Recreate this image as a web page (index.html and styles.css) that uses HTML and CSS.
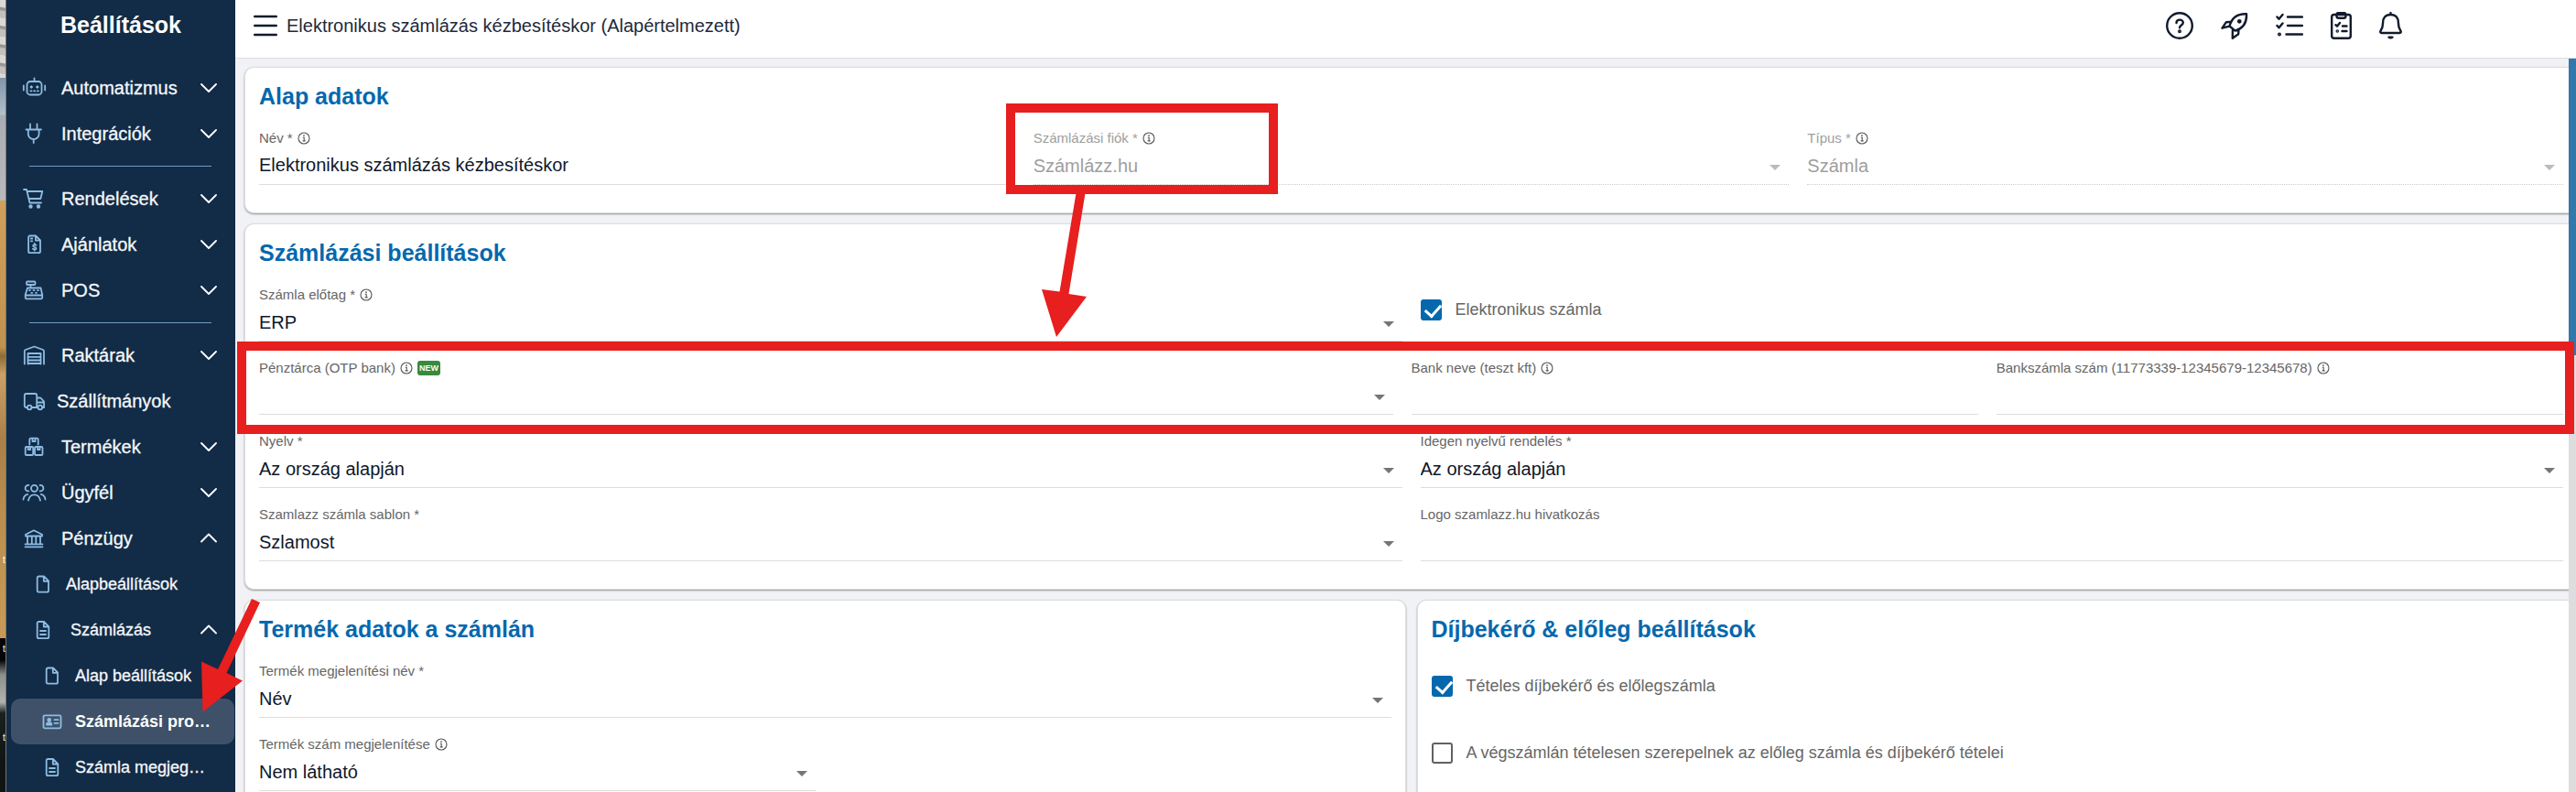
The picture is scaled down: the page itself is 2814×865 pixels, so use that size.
FILE: index.html
```html
<!DOCTYPE html>
<html lang="hu">
<head>
    <meta charset="UTF-8">
    <meta name="viewport" content="width=device-width, initial-scale=1.0">
    <title>Beállítások</title>
    <link rel="stylesheet" href="styles.css">
</head>
<body>
    <svg class="symbols" width="0" height="0" aria-hidden="true">
        <symbol id="info" viewBox="0 0 14 14">
            <circle cx="7" cy="7" r="6" fill="none" stroke="#555" stroke-width="1.1"/>
            <path d="M5.8 6.2H7.2V9.8M5.6 9.9H8.7" fill="none" stroke="#555" stroke-width="1.1"/>
            <circle cx="7" cy="4.1" r=".9" fill="#555"/>
        </symbol>
        <symbol id="down" viewBox="0 0 18 18"><path d="M1 5l8 8 8-8" fill="none" stroke="#fff" stroke-width="1.8" stroke-linecap="round" stroke-linejoin="round"/></symbol>
        <symbol id="up" viewBox="0 0 18 18"><path d="M1 12.500l8-8 8 8" fill="none" stroke="#fff" stroke-width="1.8" stroke-linecap="round" stroke-linejoin="round"/></symbol>
        <symbol id="file" viewBox="0 0 30 24"><path d="M10.500 3.500H16l5 5V19a1.700 1.700 0 0 1-1.700 1.700h-9A1.700 1.700 0 0 1 8.700 19V5.200a1.700 1.700 0 0 1 1.700-1.700zM15.800 4v4.800h5"/></symbol>
        <symbol id="file-lines" viewBox="0 0 30 24"><path d="M10.500 3H16l5.300 5.300V19.500a1.700 1.700 0 0 1-1.700 1.700h-9.200a1.700 1.700 0 0 1-1.700-1.700V4.700A1.700 1.700 0 0 1 10.500 3zM15.800 3.500v5h5M12 13h6M12 17h6"/></symbol>
    </svg>

    <div class="app">
        <div class="desktop">
            <span class="d1">t</span>
            <span class="d2">t</span>
            <span class="d3">t</span>
        </div>

        <nav class="sidebar">
            <h1>Beállítások</h1>
            <button class="item">
                <svg class="icon" viewBox="0 0 30 24"><rect x="7.500" y="5" width="16" height="14.500" rx="3.500"/><path d="M15.500 1.500V5M3.800 9.500v5M27.200 9.500v5M11.500 11h1.600M18 11h1.600M12.300 10.200v1.600M18.800 10.200v1.600M11.300 15.300h1.200M15 15.300h1.200M18.700 15.300h1.200"/></svg>
                <span>Automatizmus</span><svg class="chev"><use href="#down"/></svg>
            </button>
            <button class="item">
                <svg class="icon" viewBox="0 0 30 24"><path d="M6.500 7.500h16.500M8.800 7.500v4.700a5.900 5.900 0 0 0 11.800 0V7.500M11 1.500v6M18.500 1.500v6M14.700 18v4"/></svg>
                <span>Integrációk</span><svg class="chev"><use href="#down"/></svg>
            </button>
            <hr>
            <button class="item">
                <svg class="icon" viewBox="0 0 30 24"><path d="M4 2h3l3.500 14.500h12.500M7.500 4h16.800l-2 8H9.500"/><circle cx="11.500" cy="20.500" r="1.300" class="dot"/><circle cx="20" cy="20.500" r="1.300" class="dot"/></svg>
                <span>Rendelések</span><svg class="chev"><use href="#down"/></svg>
            </button>
            <button class="item">
                <svg class="icon" viewBox="0 0 30 24"><path d="M10.500 2.500H17l5 5v12a1.700 1.700 0 0 1-1.700 1.700h-9.500a1.700 1.700 0 0 1-1.700-1.700V4a1.700 1.700 0 0 1 1.400-1.500zM17 3v4.700h4.700M11.800 5.500h1.500M11.800 8.300h1.500"/><path d="M17.500 12.800c-1.500-1-3.400-.6-3.400.7 0 1.700 3.400 1 3.400 2.700 0 1.400-2.200 1.600-3.600.6M15.700 11v1.200M15.700 17.200v1.300"/></svg>
                <span>Ajánlatok</span><svg class="chev"><use href="#down"/></svg>
            </button>
            <button class="item">
                <svg class="icon" viewBox="0 0 30 24"><rect x="7" y="2.500" width="9.500" height="3.500" rx="1"/><path d="M11.500 6v3.500M8 9.500h14.500l1.700 7.500v3a1.300 1.300 0 0 1-1.300 1.300H7A1.300 1.300 0 0 1 5.700 20v-3zM5.700 17.500h18.500M10 12.200h1M14.500 12.200h1M19 12.200h1M12.200 14.800h1M17 14.800h1"/></svg>
                <span>POS</span><svg class="chev"><use href="#down"/></svg>
            </button>
            <hr>
            <button class="item">
                <svg class="icon" viewBox="0 0 30 24"><path d="M4.800 21.500V7.500c0-.7.300-1.200 1-1.500L15.500 2.500 25 6c.7.300 1 .8 1 1.500v14M8.500 21.500V10h14v11.500M9 13.800h13M9 17.500h13M9 21h13"/></svg>
                <span>Raktárak</span><svg class="chev"><use href="#down"/></svg>
            </button>
            <a class="item link" href="#">
                <svg class="icon" viewBox="0 0 30 24"><path d="M8 19H6.500A1.700 1.700 0 0 1 4.800 17.300V5.700A1.700 1.700 0 0 1 6.500 4h10a1.700 1.700 0 0 1 1.700 1.700V19M12.500 19h6M18.200 8.500h3.300c.6 0 1 .2 1.400.6l2.600 2.700c.4.400.6.800.6 1.400V19h-1M18.500 13.500H26"/><circle cx="10.200" cy="19" r="2.300"/><circle cx="21.800" cy="19" r="2.300"/></svg>
                <span>Szállítmányok</span>
            </a>
            <button class="item">
                <svg class="icon" viewBox="0 0 30 24"><path d="M10.300 9.500V4a1.300 1.300 0 0 1 1.300-1.300h6.800A1.300 1.300 0 0 1 19.700 4v5.500M13.500 3v3h3V3"/><rect x="5.700" y="12" width="8.500" height="9" rx="1.300"/><rect x="16" y="12" width="8.500" height="9" rx="1.300"/><path d="M8.700 12v3h2.500v-3M19 12v3h2.500v-3"/></svg>
                <span>Termékek</span><svg class="chev"><use href="#down"/></svg>
            </button>
            <button class="item">
                <svg class="icon" viewBox="0 0 30 24"><circle cx="15.500" cy="7.300" r="3.500"/><path d="M9.300 4A3.200 3.200 0 1 0 9.300 10.300M21.700 4a3.200 3.200 0 1 1 0 6.300M9 20.500c.8-4.200 3.200-6.200 6.500-6.200s5.700 2 6.500 6.200M3.500 19.500c.3-3 1.600-5 4.700-5.700M27.500 19.500c-.3-3-1.600-5-4.700-5.700"/></svg>
                <span>Ügyfél</span><svg class="chev"><use href="#down"/></svg>
            </button>
            <button class="item">
                <svg class="icon" viewBox="0 0 30 24"><path d="M15 3.300 6 7.800v1.700h18V7.800zM5.500 18.300h19M5.500 21.300h19M8 9.500v8.500M12.800 9.500v8.500M17.300 9.500v8.500M22 9.500v8.500"/></svg>
                <span>Pénzügy</span><svg class="chev"><use href="#up"/></svg>
            </button>
            <a class="item link sub" href="#"><svg class="icon"><use href="#file"/></svg><span>Alapbeállítások</span></a>
            <button class="item sub"><svg class="icon"><use href="#file-lines"/></svg><span>Számlázás</span><svg class="chev"><use href="#up"/></svg></button>
            <a class="item link sub deep" href="#"><svg class="icon"><use href="#file"/></svg><span>Alap beállítások</span></a>
            <a class="item link sub deep active" href="#">
                <svg class="icon" viewBox="0 0 30 24"><rect x="5.500" y="5.300" width="19" height="14" rx="1.500"/><circle cx="11.700" cy="10.300" r="1.500" class="dot"/><path class="dot" d="M9 15.500c0-3 5.400-3 5.400 0z"/><path d="M17.500 10.200h4M17.500 13.800h4"/></svg>
                <span>Számlázási pro…</span>
            </a>
            <a class="item link sub deep" href="#"><svg class="icon"><use href="#file-lines"/></svg><span>Számla megjeg…</span></a>
        </nav>

        <div class="page">
            <header class="topbar">
                <button class="menu" aria-label="Menü"><svg width="26" height="24" viewBox="0 0 26 24"><path d="M1.200 2h23.600M1.200 12h23.600M1.200 22h23.600"/></svg></button>
                <span class="page-title">Elektronikus számlázás kézbesítéskor (Alapértelmezett)</span>
                <div class="tools">
                    <button aria-label="Súgó"><svg width="30" height="30" viewBox="0 0 30 30"><circle cx="15" cy="15" r="13.800"/><path d="M11.500 12c0-4.600 7.300-4.400 7.300-.3 0 2.900-3.800 2.600-3.800 5.600"/><circle cx="15" cy="21.300" r=".8"/></svg></button>
                    <button aria-label="Indítás"><svg width="30" height="30" viewBox="0 0 30 30"><path d="M9.500 15.500C12 6.500 18.500 1.800 28 2.300c.6 9-3.800 15.700-12.300 18.300zM11.500 10.800l-5.600.4L1.500 17.700l8-2M19.500 18.800l-.3 5.500-6.400 4.500.1-8.800"/><circle cx="20.300" cy="10.300" r="1.200"/></svg></button>
                    <button aria-label="Feladatok"><svg width="30" height="30" viewBox="0 0 30 30"><path d="M1.500 5.500l2 2.300L7.500 3M1.500 15l2 2.300L7.500 12.500M13 5.500h16M13 15h16M11.500 24.500H29"/><circle cx="4" cy="24.500" r=".8"/></svg></button>
                    <button aria-label="Lista"><svg width="23" height="30" viewBox="0 0 23 30"><rect x="1.200" y="3" width="20.600" height="25.700" rx="2.500"/><path d="M6.500 3v1.500c0 1.500 1 2.300 2.300 2.300h5.500c1.300 0 2.200-.8 2.200-2.300V3c0-1.200-.9-2-2.200-2H8.800C7.500 1 6.500 1.800 6.500 3zM5.500 14.200l1.500 1.500 3-3.700M13 15.500h4.500M12.500 21h5"/><circle cx="7.300" cy="21" r=".6"/></svg></button>
                    <button aria-label="Értesítések"><svg width="25" height="30" viewBox="0 0 25 30"><path d="M12.500 1v2M12.500 3c-6 0-8.400 4-8.400 8.700 0 4.500-.8 6.600-2.500 9-.7 1.100-.3 2.300 1 2.300h19.800c1.300 0 1.700-1.200 1-2.300-1.700-2.400-2.500-4.500-2.500-9C20.900 7 18.500 3 12.500 3z"/><path d="M10.500 27.700c1 .9 3 .9 4 0z"/></svg></button>
                </div>
            </header>

            <main class="content">
                <section class="card wide">
                    <h2>Alap adatok</h2>
                    <div class="row three">
                        <div class="field">
                            <label for="nev">Név * <svg class="info"><use href="#info"/></svg></label>
                            <input type="text" id="nev" value="Elektronikus számlázás kézbesítéskor">
                        </div>
                        <div class="field disabled">
                            <label for="fiok">Számlázási fiók * <svg class="info"><use href="#info"/></svg></label>
                            <div class="select"><select id="fiok" disabled><option>Számlázz.hu</option></select></div>
                            <div class="mark mark-account"></div>
                        </div>
                        <div class="field disabled">
                            <label for="tipus">Típus * <svg class="info"><use href="#info"/></svg></label>
                            <div class="select"><select id="tipus" disabled><option>Számla</option></select></div>
                        </div>
                    </div>
                </section>

                <section class="card wide">
                    <h2>Számlázási beállítások</h2>
                    <div class="row two">
                        <div class="field">
                            <label for="elotag">Számla előtag * <svg class="info"><use href="#info"/></svg></label>
                            <div class="select"><select id="elotag"><option>ERP</option></select></div>
                        </div>
                        <label class="check"><input type="checkbox" checked> Elektronikus számla</label>
                    </div>
                    <div class="row bank">
                        <div class="field">
                            <label for="penztarca">Pénztárca (OTP bank) <svg class="info"><use href="#info"/></svg><span class="badge">NEW</span></label>
                            <div class="select"><select id="penztarca"><option></option></select></div>
                        </div>
                        <div class="field">
                            <label for="bank">Bank neve (teszt kft) <svg class="info"><use href="#info"/></svg></label>
                            <input type="text" id="bank">
                        </div>
                        <div class="field">
                            <label for="szamlaszam">Bankszámla szám (11773339-12345679-12345678) <svg class="info"><use href="#info"/></svg></label>
                            <input type="text" id="szamlaszam">
                        </div>
                        <div class="mark mark-bank"></div>
                    </div>
                    <div class="row two">
                        <div class="field">
                            <label for="nyelv">Nyelv *</label>
                            <div class="select"><select id="nyelv"><option>Az ország alapján</option></select></div>
                        </div>
                        <div class="field">
                            <label for="idegen">Idegen nyelvű rendelés *</label>
                            <div class="select"><select id="idegen"><option>Az ország alapján</option></select></div>
                        </div>
                    </div>
                    <div class="row two">
                        <div class="field">
                            <label for="sablon">Szamlazz számla sablon *</label>
                            <div class="select"><select id="sablon"><option>Szlamost</option></select></div>
                        </div>
                        <div class="field">
                            <label for="logo">Logo szamlazz.hu hivatkozás</label>
                            <input type="text" id="logo">
                        </div>
                    </div>
                </section>

                <div class="cards">
                    <section class="card">
                        <h2>Termék adatok a számlán</h2>
                        <div class="row">
                            <div class="field">
                                <label for="termeknev">Termék megjelenítési név *</label>
                                <div class="select"><select id="termeknev"><option>Név</option></select></div>
                            </div>
                        </div>
                        <div class="row two">
                            <div class="field">
                                <label for="termekszam">Termék szám megjelenítése <svg class="info"><use href="#info"/></svg></label>
                                <div class="select"><select id="termekszam"><option>Nem látható</option></select></div>
                            </div>
                        </div>
                    </section>
                    <section class="card wide">
                        <h2>Díjbekérő &amp; előleg beállítások</h2>
                        <div class="checks">
                            <label class="check"><input type="checkbox" checked> Tételes díjbekérő és előlegszámla</label>
                            <label class="check"><input type="checkbox"> A végszámlán tételesen szerepelnek az előleg számla és díjbekérő tételei</label>
                        </div>
                    </section>
                </div>
            </main>
            <div class="scrollbar"><div class="thumb"></div></div>
        </div>
    </div>

    <!-- arrows -->
    <svg class="arrows" aria-hidden="true">
        <path d="M1176 208h10l-18.500 113 19.500 3-33 44-16-52 19.500 2.500z"/>
        <path d="M275 654l9 4-36.500 77 17.500 8.500-43.500 34L220 722.500l18 8.500z"/>
    </svg>
</body>
</html>
```

FILE: styles.css
```css
* {
    box-sizing: border-box;
}
body {
    margin: 0;
    font-family: Arial, "Liberation Sans", sans-serif;
    color: #0f172a;
    overflow: hidden;
}
button, input, select {
    font: inherit;
    color: inherit;
}
button {
    background: none;
    border: 0;
    padding: 0;
    cursor: pointer;
}
.symbols {
    position: absolute;
}
.app {
    display: flex;
    height: 100vh;
    overflow: hidden;
}

/* strip of the desktop behind the window */
.desktop {
    position: relative;
    flex: none;
    width: 7px;
    overflow: hidden;
    border-right: 1px solid #777;
    background:
        repeating-linear-gradient(190deg, #dcd8d6 0 8px, #9a9593 9px 11px, #c4c0be 13px 20px) 0 0 / 100% 85px no-repeat,
        linear-gradient(#7e95ab 0, #b3bfcb 40px, #a9adb3 41px, #b9b9bb 134px) 0 85px / 100% 134px no-repeat,
        linear-gradient(#cfa05a, #c0924e 160px, #8f6a35 170px, #caa266 190px, #a98048 260px, #b98d4d 340px, #c79b57 478px) 0 219px / 100% 478px no-repeat,
        linear-gradient(#050505 0 24px, #8c918d 40px, #b0b3ae 70px, #1a201d 82px, #101514 140px, #1c2421) 0 697px;
}
.desktop span {
    position: absolute;
    left: 3px;
    font-size: 10px;
    line-height: 12px;
    color: #fff;
}
.d1 { top: 606px; }
.d2 { top: 703px; }
.d3 { top: 800px; }

.sidebar {
    flex: none;
    width: 250px;
    background: #122b46;
    color: #f4f7fa;
}
.sidebar h1 {
    margin: 0 0 17px;
    font-size: 25px;
    line-height: 54px;
    text-align: center;
    color: #fff;
}
.sidebar hr {
    margin: 10px 26px 10px 25px;
    border: 0;
    border-top: 1px solid #6d9fc4;
}
.item {
    display: flex;
    align-items: center;
    gap: 15px;
    width: 244px;
    height: 50px;
    margin-left: 5px;
    padding: 0 19px 0 10px;
    border-radius: 10px;
    font-size: 20px;
    color: inherit;
    text-align: left;
    text-decoration: none;
    white-space: nowrap;
    -webkit-text-stroke: 0.3px;
}
.item span {
    flex: 1;
}
.link {
    gap: 10px;
}
.sub {
    padding-left: 20px;
    font-size: 18px;
}
.deep {
    padding-left: 30px;
}
.active {
    background: #3e5168;
    color: #fff;
    font-weight: bold;
    -webkit-text-stroke: 0;
}
.icon {
    flex: none;
    width: 30px;
    height: 24px;
    fill: none;
    stroke: #8ebce2;
    stroke-width: 1.8;
    stroke-linecap: round;
    stroke-linejoin: round;
}
.dot {
    fill: #8ebce2;
}
.chev {
    flex: none;
    width: 18px;
    height: 18px;
}

.page {
    position: relative;
    flex: 1;
    min-width: 0;
    display: flex;
    flex-direction: column;
}
.topbar {
    flex: none;
    display: flex;
    align-items: center;
    height: 64px;
    padding: 0 190px 7px 20px;
    border-bottom: 1px solid #ddd;
    background: #fff;
}
.topbar svg {
    display: block;
    fill: none;
    stroke: #111b2d;
    stroke-width: 2.4;
    stroke-linecap: round;
    stroke-linejoin: round;
}
.page-title {
    margin-left: 10px;
    font-size: 20px;
    color: #1e293b;
}
.tools {
    display: flex;
    gap: 30px;
    margin-left: auto;
}

.content {
    flex: 1;
    min-height: 0;
    display: flex;
    flex-direction: column;
    gap: 11px;
    padding: 9px 0 0 10px;
    background: #f1f2f6;
    overflow: hidden;
}
.card {
    flex: none;
    padding: 16px 15px 30px;
    border: 1px solid #ddd;
    border-radius: 10px;
    background: #fff;
    box-shadow: 0 1px 2px rgba(0, 0, 0, 0.4);
}
.wide {
    padding-right: 14px;
    border-right: 0;
    border-radius: 10px 0 0 10px;
}
.card h2 {
    margin: 0 0 22px;
    font-size: 25px;
    line-height: 30px;
    color: #0568ad;
}
.cards {
    display: grid;
    grid-template-columns: 1fr 1fr;
    gap: 12px;
    margin-right: -2px;
}
.row {
    position: relative;
    display: grid;
    gap: 20px;
}
.row + .row {
    margin-top: 20px;
}
.two { grid-template-columns: 1fr 1fr; }
.three { grid-template-columns: 1fr 1fr 1fr; }
.bank { grid-template-columns: 2fr 1fr 1fr; }

.field {
    position: relative;
    min-width: 0;
}
.field label {
    display: flex;
    align-items: center;
    gap: 5px;
    height: 18px;
    font-size: 15px;
    line-height: 18px;
    color: #666;
    white-space: nowrap;
}
.info {
    width: 14px;
    height: 14px;
}
.badge {
    padding: 0 2px;
    border-radius: 3px;
    background: #388a3c;
    color: #fff;
    font-size: 9px;
    font-weight: bold;
    line-height: 16px;
}
.field input,
.field select {
    display: block;
    width: 100%;
    height: 42px;
    padding: 0;
    border: 0;
    border-bottom: 1px solid #ddd;
    border-radius: 0;
    background: none;
    font-size: 20px;
    outline: none;
    appearance: none;
}
.select {
    position: relative;
}
.select::after {
    content: "";
    position: absolute;
    right: 9px;
    top: 20px;
    border: 6px solid transparent;
    border-top-color: #757575;
    border-bottom: 0;
    pointer-events: none;
}
.disabled label {
    color: #9e9e9e;
}
.disabled select {
    border-bottom-style: dotted;
    border-bottom-color: #ccc;
    color: #9e9e9e;
    opacity: 1;
}
.disabled .select::after {
    border-top-color: #bbb;
}

.check {
    display: flex;
    align-items: center;
    gap: 15px;
    height: 50px;
    font-size: 18px;
    color: #666;
}
.check input {
    position: relative;
    flex: none;
    width: 23px;
    height: 23px;
    margin: 0;
    border: 2px solid #616161;
    border-radius: 3px;
    appearance: none;
}
.check input:checked {
    border-color: #0568ad;
    background: #0568ad;
}
.check input:checked::after {
    content: "";
    position: absolute;
    left: 6px;
    top: 0;
    width: 8px;
    height: 14px;
    border: solid #fff;
    border-width: 0 3px 3px 0;
    transform: rotate(42deg);
}
.checks {
    display: flex;
    flex-direction: column;
    gap: 23px;
}

.scrollbar {
    position: absolute;
    top: 64px;
    right: 0;
    bottom: 0;
    width: 8px;
    background: #ddd;
}
.thumb {
    height: 324px;
    background: #3278ab;
}

/* red highlights */
.mark {
    position: absolute;
    z-index: 2;
    border: 10px solid #e71f1f;
    pointer-events: none;
}
.mark-account {
    left: -30px;
    top: -29px;
    width: 297px;
    height: 99px;
}
.mark-bank {
    inset: -20px -12px -21px -24px;
}
.arrows {
    position: absolute;
    z-index: 3;
    top: 0;
    left: 0;
    width: 100%;
    height: 100%;
    fill: #e71f1f;
    pointer-events: none;
}
```
